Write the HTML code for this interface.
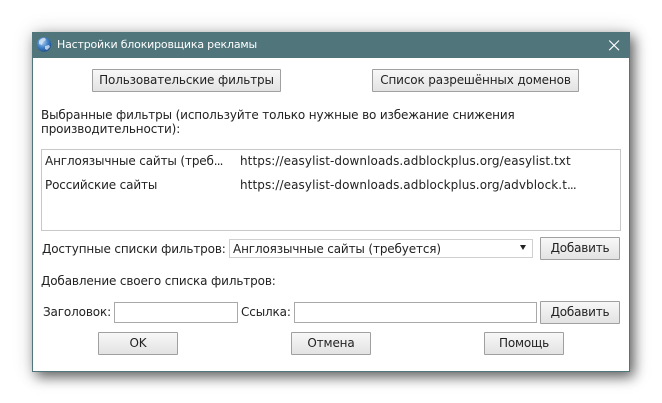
<!DOCTYPE html>
<html><head><meta charset="utf-8">
<style>
html,body{margin:0;padding:0;background:#fff;width:662px;height:403px;overflow:hidden}
body{position:relative;font-family:"DejaVu Sans","Liberation Sans",sans-serif;font-size:12px;color:#222;letter-spacing:-.14px}
.dlg{position:absolute;left:32px;top:32px;width:596px;height:338px;background:#fff;border:1px solid #50757b;box-shadow:4px 5px 12px rgba(0,0,0,.58),0 0 20px rgba(0,0,0,.14)}
.tb{position:absolute;left:32px;top:32px;width:598px;height:26px;background:#50757b}
.t{position:absolute;white-space:nowrap;line-height:14px;height:14px}
.u{letter-spacing:.08px}
.d{letter-spacing:-.9px}
.b{position:absolute;box-sizing:border-box;border:1px solid #a0a0a0;background:linear-gradient(#f8f8f8,#e3e3e3);text-align:center;white-space:nowrap;line-height:21px;height:23px;border-radius:1px}
.i{position:absolute;box-sizing:border-box;border:1px solid #a9a9a9;background:#fff}
</style></head><body>
<div class="dlg"></div>
<div class="tb"></div>
<svg style="position:absolute;left:36px;top:36px" width="16" height="16" viewBox="0 0 16 16">
<defs><radialGradient id="g" cx=".4" cy=".35" r=".7"><stop offset="0" stop-color="#a9cdf0"/><stop offset=".55" stop-color="#3f7fc4"/><stop offset="1" stop-color="#1d4a8c"/></radialGradient></defs>
<circle cx="8" cy="8.500" r="7.200" fill="url(#g)"/>
<path d="M3 5c2-3 5-3.500 6-3l1 2-3 2-1 3-3-1zM9 10l4-1 1 2-3 3-2-1z" fill="#dfeaf5" opacity=".75"/>
</svg>
<div class="t" style="left:57px;top:38px;color:#fff;font-size:11px;letter-spacing:-.19px">Настройки блокировщика рекламы</div>
<svg style="position:absolute;left:608px;top:39px" width="13" height="13" viewBox="0 0 13 13"><path d="M1.200 1.500L11 11.200M11 1.500L1.200 11.200" stroke="#fff" stroke-width="1.100" fill="none"/></svg>

<div class="b" style="left:92px;top:69px;width:189px">Пользовательские фильтры</div>
<div class="b" style="left:372px;top:69px;width:207px">Список разрешённых доменов</div>

<div class="t" style="left:41px;top:108px">Выбранные фильтры (используйте только нужные во избежание снижения</div>
<div class="t" style="left:41px;top:122px">производительности):</div>

<div class="i" style="left:41px;top:149px;width:580px;height:82px;border-color:#c8c8c8"></div>
<div class="t" style="left:45px;top:154px">Англоязычные сайты (треб<span class="d">...</span></div>
<div class="t u" style="left:240px;top:154px">https://easylist-downloads.adblockplus.org/easylist.txt</div>
<div class="t" style="left:45px;top:178px">Российские сайты</div>
<div class="t u" style="left:240px;top:178px">https://easylist-downloads.adblockplus.org/advblock.t<span class="d">...</span></div>

<div class="t" style="left:42px;top:242px">Доступные списки фильтров:</div>
<div class="i" style="left:229px;top:239px;width:304px;height:19px;border-color:#d0d0d0"></div>
<div class="t" style="left:233px;top:242px">Англоязычные сайты (требуется)</div>
<svg style="position:absolute;left:520px;top:245px" width="6" height="5" viewBox="0 0 6 5"><path d="M0 0H6L3 5z" fill="#222"/></svg>
<div class="b" style="left:540px;top:237px;width:80px;letter-spacing:-.2px">Добавить</div>

<div class="t" style="left:41px;top:274px">Добавление своего списка фильтров:</div>

<div class="t" style="left:43px;top:305px">Заголовок:</div>
<div class="i" style="left:114px;top:302px;width:124px;height:21px"></div>
<div class="t" style="left:241px;top:305px">Ссылка:</div>
<div class="i" style="left:294px;top:302px;width:243px;height:21px"></div>
<div class="b" style="left:540px;top:301px;width:80px;letter-spacing:-.2px">Добавить</div>

<div class="b" style="left:98px;top:332px;width:80px">OK</div>
<div class="b" style="left:291px;top:332px;width:80px">Отмена</div>
<div class="b" style="left:484px;top:332px;width:80px;letter-spacing:-.2px">Помощь</div>
</body></html>
